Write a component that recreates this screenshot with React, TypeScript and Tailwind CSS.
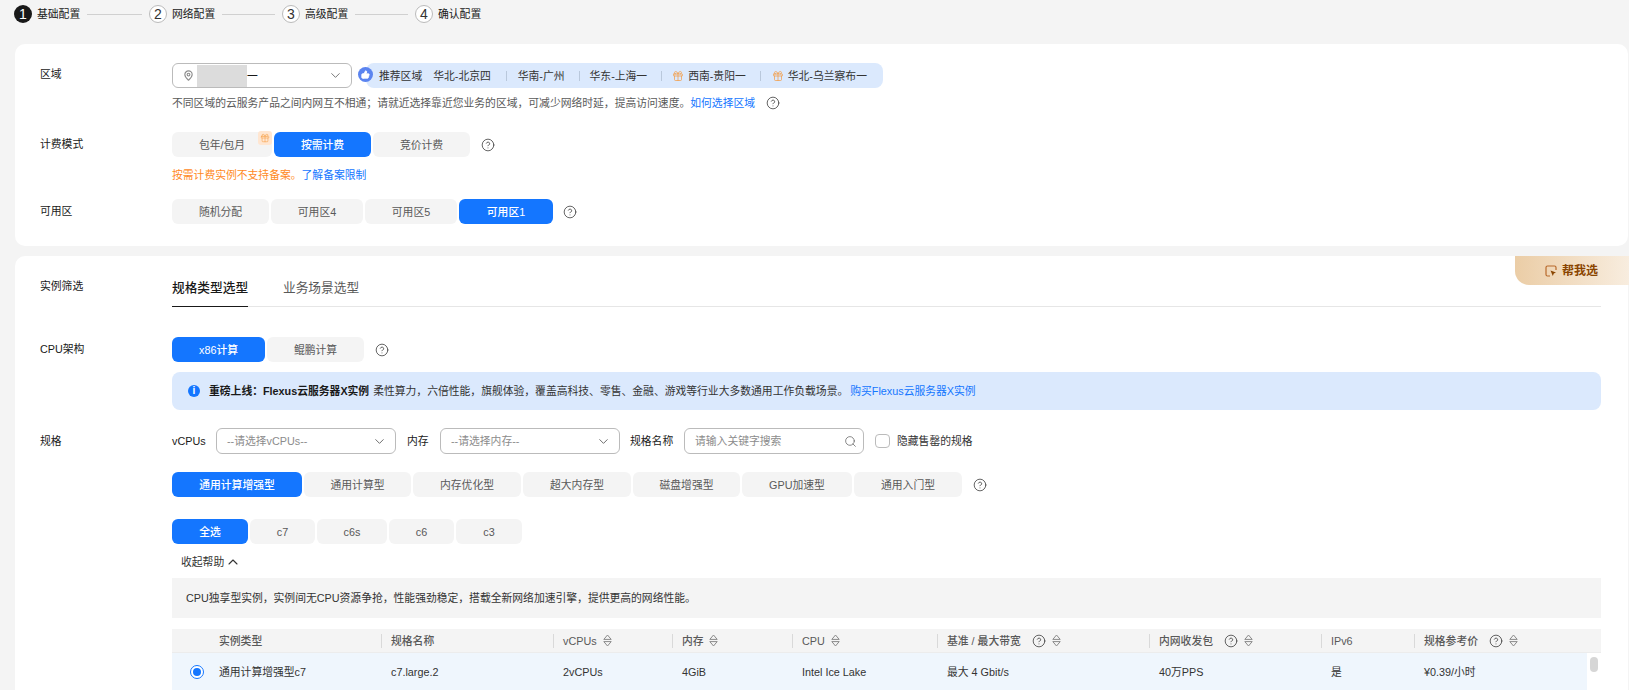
import React from "react";
import { ChevronDown, ChevronUp, CircleHelp, Gift, MapPin, Search, ThumbsUp } from "lucide-react";

const Help = ({ className = "" }: { className?: string }) => (
  <CircleHelp size={14} strokeWidth={1.3} className={"text-[#333] shrink-0 " + className} />
);

const Sort = ({ className = "" }: { className?: string }) => (
  <svg width="9" height="13" viewBox="0 0 9 13" fill="none" stroke="#8a8a8a" strokeWidth="1" className={"shrink-0 " + className}>
    <path d="M0.8 5.4 L4.5 1 L8.2 5.4 Z" />
    <path d="M0.8 7.6 L4.5 12 L8.2 7.6 Z" />
  </svg>
);

const Seg = ({ w, active, children }: { w: string; active?: boolean; children: React.ReactNode }) => (
  <div
    className={
      "h-[25px] flex items-center justify-center rounded-[6px] shrink-0 " +
      w +
      (active ? " bg-[#1476ff] text-white font-medium" : " bg-[#f4f4f4] text-[#595959]")
    }
  >
    {children}
  </div>
);

const Step = ({ n, text, active }: { n: number; text: string; active?: boolean }) => (
  <div className="flex items-center gap-[5px] shrink-0">
    <div
      className={
        "w-[18px] h-[18px] rounded-full flex items-center justify-center text-[14px] " +
        (active ? "bg-[#191919] text-white" : "bg-white border border-[#bbb] text-[#333]")
      }
    >
      {n}
    </div>
    <span className="text-[#191919] w-[44px]">{text}</span>
  </div>
);

const Line = ({ w }: { w: string }) => <div className={"h-px bg-[#d0d0d0] shrink-0 " + w} />;

const Sep = () => <div className="w-px h-[10px] bg-[#b9c8dc] shrink-0" />;

const Select = ({ w, text }: { w: string; text: string }) => (
  <div className={"h-[26px] border border-[#bbb] rounded-[6px] flex items-center justify-between pl-[10px] pr-[8px] text-[#8c8c8c] shrink-0 " + w}>
    <span>{text}</span>
    <ChevronDown size={15} strokeWidth={1.4} className="text-[#595959]" />
  </div>
);

const cols = "grid-cols-[209px_172px_119px_120px_145px_212px_172px_93px_187px]";
const rowCols = "grid-cols-[209px_172px_119px_120px_145px_212px_172px_93px_173px]";

const HeadCell = ({ children }: { children?: React.ReactNode }) => (
  <div className="flex items-center h-full">
    <div className="w-px h-[14px] bg-[#d9d9d9] mr-[9px] shrink-0" />
    {children}
  </div>
);

export default function App() {
  return (
    <div
      className="w-[1629px] h-[690px] overflow-hidden bg-[#f4f4f4] pl-[15px] pr-px text-[10.8px] leading-[16px]"
      style={{ fontFamily: '"Liberation Sans","Noto Sans CJK SC",sans-serif' }}
    >
      {/* Steps */}
      <div className="h-[44px] pt-[5px] -ml-[1px] flex items-start">
        <div className="h-[18px] flex items-center">
          <Step n={1} text="基础配置" active />
          <Line w="w-[55px] ml-[6px] mr-[7px]" />
          <Step n={2} text="网络配置" />
          <Line w="w-[53px] ml-[6px] mr-[7px]" />
          <Step n={3} text="高级配置" />
          <Line w="w-[53px] ml-[6px] mr-[7px]" />
          <Step n={4} text="确认配置" />
        </div>
      </div>

      {/* Card 1 */}
      <div className="bg-white rounded-[10px] pt-[19px] pb-[22px]">
        <div className="flex items-center h-[25px]">
          <div className="w-[157px] shrink-0 pl-[25px] pb-[4px] text-[#191919]">区域</div>
          <div className="w-[180px] h-[25px] border border-[#bbb] rounded-[6px] flex items-center pl-[10px] pr-[8px] shrink-0 text-[#191919]">
            <MapPin size={11} strokeWidth={2.4} className="text-[#8c8c8c] shrink-0" />
            <div className="ml-[3px] w-[50px] h-[22px] bg-[#dcdcdc] shrink-0" />
            <span>一</span>
            <ChevronDown size={15} strokeWidth={1.3} className="ml-auto text-[#595959]" />
          </div>
          <div className="relative ml-[14px] w-[517px] h-[25px] bg-[#dbe9fd] rounded-[8px] flex items-center text-[#333] shrink-0">
            <div className="absolute -left-[8px] top-[4px] w-[15px] h-[15px] rounded-full bg-[#5b84f0] flex items-center justify-center">
              <ThumbsUp size={9} fill="white" stroke="white" />
            </div>
            <span className="ml-[13px] text-[#333]">推荐区域</span>
            <span className="ml-[11px]">华北-北京四</span>
            <div className="ml-[15px]"><Sep /></div>
            <span className="ml-[11px]">华南-广州</span>
            <div className="ml-[14px]"><Sep /></div>
            <span className="ml-[10px]">华东-上海一</span>
            <div className="ml-[14px]"><Sep /></div>
            <Gift size={12} strokeWidth={1.4} className="ml-[10px] text-[#f59a3c]" />
            <span className="ml-[4px]">西南-贵阳一</span>
            <div className="ml-[14px]"><Sep /></div>
            <Gift size={12} strokeWidth={1.4} className="ml-[11px] text-[#f59a3c]" />
            <span className="ml-[4px]">华北-乌兰察布一</span>
          </div>
        </div>
        <div className="flex items-center mt-[7px] h-[16px]">
          <div className="w-[157px] shrink-0" />
          <span className="text-[#595959]">不同区域的云服务产品之间内网互不相通；请就近选择靠近您业务的区域，可减少网络时延，提高访问速度。</span>
          <span className="text-[#1476ff]">如何选择区域</span>
          <Help className="ml-[11px]" />
        </div>

        <div className="flex items-center mt-[21px]">
          <div className="w-[157px] shrink-0 pl-[25px] pb-[1px] text-[#191919]">计费模式</div>
          <div className="flex gap-[2px] items-center">
            <div className="relative">
              <Seg w="w-[100px]">包年/包月</Seg>
              <div className="absolute right-0 -top-[1px] w-[14px] h-[14px] bg-[#ffe6d1] rounded-[3px] flex items-center justify-center">
                <Gift size={10} strokeWidth={1.3} className="text-[#f59a3c]" />
              </div>
            </div>
            <Seg w="w-[97px]" active>按需计费</Seg>
            <Seg w="w-[97px]">竞价计费</Seg>
            <Help className="ml-[9px]" />
          </div>
        </div>
        <div className="flex items-center mt-[10px] h-[16px]">
          <div className="w-[157px] shrink-0" />
          <span className="text-[#ff8a1f]">按需计费实例不支持备案。</span>
          <span className="text-[#1476ff]">了解备案限制</span>
        </div>
        <div className="flex items-center mt-[16px]">
          <div className="w-[157px] shrink-0 pl-[25px] pb-[1px] text-[#191919]">可用区</div>
          <div className="flex gap-[2px] items-center">
            <Seg w="w-[97px]">随机分配</Seg>
            <Seg w="w-[92px]">可用区4</Seg>
            <Seg w="w-[92px]">可用区5</Seg>
            <Seg w="w-[94px]" active>可用区1</Seg>
            <Help className="ml-[8px]" />
          </div>
        </div>
      </div>

      {/* Card 2 */}
      <div className="relative mt-[10px] bg-white rounded-t-[10px] pt-[20px] h-[434px]">
        <div className="absolute right-[-1px] top-0 w-[114px] h-[29px] rounded-bl-[14px] bg-gradient-to-r from-[#ebcda6] to-[#f8eddf] flex items-center pl-[30px] gap-[5px]">
          <svg width="12" height="12" viewBox="0 0 12 12" fill="none" className="shrink-0">
            <path d="M5 11H2.5A1.5 1.5 0 0 1 1 9.5v-7A1.5 1.5 0 0 1 2.5 1h7A1.5 1.5 0 0 1 11 2.500V5" stroke="#b8692b" strokeWidth="1.2" />
            <path d="M5.500 5.500 L11 7.500 L8.800 8.500 L7.800 11 Z" fill="#8a4500" />
          </svg>
          <span className="text-[12px] font-bold text-[#8a4500]">帮我选</span>
        </div>

        <div className="flex items-start pr-[27px]">
          <div className="w-[157px] shrink-0 pl-[25px] pt-[2px] text-[#191919]">实例筛选</div>
          <div className="flex-1 h-[31px] border-b border-[#e6e6e6] flex items-start gap-[35px] text-[12.7px]">
            <div className="h-[31px] w-[76px] whitespace-nowrap border-b border-[#191919] pt-[4px] text-[#191919] font-medium">规格类型选型</div>
            <div className="pt-[4px] whitespace-nowrap text-[#595959]">业务场景选型</div>
          </div>
        </div>

        <div className="flex items-center mt-[30px]">
          <div className="w-[157px] shrink-0 pl-[25px] pb-[1px] text-[#191919]">CPU架构</div>
          <div className="flex gap-[2px] items-center">
            <Seg w="w-[93px]" active>x86计算</Seg>
            <Seg w="w-[97px]">鲲鹏计算</Seg>
            <Help className="ml-[9px]" />
          </div>
        </div>

        <div className="ml-[157px] mr-[27px] mt-[10px] h-[38px] bg-[#dbe9fd] rounded-[8px] flex items-center pl-[16px]">
          <div className="w-[12px] h-[12px] rounded-full bg-[#1476ff] text-white flex items-center justify-center text-[10px] font-bold shrink-0">i</div>
          <span className="ml-[9px] font-bold text-[#191919]">重磅上线：Flexus云服务器X实例</span>
          <span className="ml-[4px] text-[#333]">柔性算力，六倍性能，旗舰体验，覆盖高科技、零售、金融、游戏等行业大多数通用工作负载场景。</span>
          <span className="ml-[2px] text-[#1476ff]">购买Flexus云服务器X实例</span>
        </div>

        <div className="flex items-center mt-[18px] h-[26px]">
          <div className="w-[157px] shrink-0 pl-[25px] pb-[1px] text-[#191919]">规格</div>
          <span className="w-[44px] text-[#191919] shrink-0">vCPUs</span>
          <Select w="w-[180px]" text="--请选择vCPUs--" />
          <span className="ml-[11px] w-[33px] text-[#191919] shrink-0">内存</span>
          <Select w="w-[180px]" text="--请选择内存--" />
          <span className="ml-[10px] w-[54px] text-[#191919] shrink-0">规格名称</span>
          <div className="w-[180px] h-[26px] border border-[#bbb] rounded-[6px] flex items-center justify-between pl-[10px] pr-[6px] text-[#8c8c8c] shrink-0">
            <span>请输入关键字搜索</span>
            <Search size={13} strokeWidth={1.3} className="text-[#595959]" />
          </div>
          <div className="ml-[11px] w-[15px] h-[14px] border border-[#bbb] rounded-[4px] shrink-0" />
          <span className="ml-[7px] text-[#333]">隐藏售罄的规格</span>
        </div>

        <div className="flex items-center mt-[18px] ml-[157px] gap-[2px]">
          <Seg w="w-[130px]" active>通用计算增强型</Seg>
          <Seg w="w-[107px]">通用计算型</Seg>
          <Seg w="w-[108px]">内存优化型</Seg>
          <Seg w="w-[108px]">超大内存型</Seg>
          <Seg w="w-[107px]">磁盘增强型</Seg>
          <Seg w="w-[110px]">GPU加速型</Seg>
          <Seg w="w-[108px]">通用入门型</Seg>
          <Help className="ml-[9px]" />
        </div>

        <div className="flex items-center mt-[22px] ml-[157px] gap-[2px]">
          <Seg w="w-[76px]" active>全选</Seg>
          <Seg w="w-[65px]">c7</Seg>
          <Seg w="w-[70px]">c6s</Seg>
          <Seg w="w-[65px]">c6</Seg>
          <Seg w="w-[66px]">c3</Seg>
        </div>

        <div className="flex items-center mt-[10px] h-[16px] ml-[166px] text-[#333]">
          <span>收起帮助</span>
          <ChevronUp size={16} strokeWidth={1.6} className="ml-[1px]" />
        </div>

        <div className="ml-[157px] mr-[27px] mt-[8px] h-[40px] bg-[#f4f4f4] flex items-center pl-[14px] text-[#333]">
          CPU独享型实例，实例间无CPU资源争抢，性能强劲稳定，搭载全新网络加速引擎，提供更高的网络性能。
        </div>

        <div className="ml-[157px] mr-[27px] mt-[11px]">
          <div className={"grid h-[24px] bg-[#f4f4f4] text-[#595959] font-medium border-b border-[#ececec] " + cols}>
            <div className="flex items-center pl-[47px]">实例类型</div>
            <HeadCell>规格名称</HeadCell>
            <HeadCell>vCPUs<Sort className="ml-[6px]" /></HeadCell>
            <HeadCell>内存<Sort className="ml-[5px]" /></HeadCell>
            <HeadCell>CPU<Sort className="ml-[6px]" /></HeadCell>
            <HeadCell>基准 / 最大带宽<Help className="ml-[11px]" /><Sort className="ml-[6px]" /></HeadCell>
            <HeadCell>内网收发包<Help className="ml-[11px]" /><Sort className="ml-[6px]" /></HeadCell>
            <HeadCell>IPv6</HeadCell>
            <HeadCell>规格参考价<Help className="ml-[11px]" /><Sort className="ml-[6px]" /></HeadCell>
          </div>
          <div className="flex">
            <div className={"grid h-[37px] w-[1415px] bg-[#eff6fd] text-[#333] items-center " + rowCols}>
              <div className="flex items-center pl-[18px]">
                <div className="w-[14px] h-[14px] rounded-full border border-[#1476ff] bg-white flex items-center justify-center shrink-0">
                  <div className="w-[8px] h-[8px] rounded-full bg-[#1476ff]" />
                </div>
                <span className="ml-[15px]">通用计算增强型c7</span>
              </div>
              <div className="pl-[10px]">c7.large.2</div>
              <div className="pl-[10px]">2vCPUs</div>
              <div className="pl-[10px]">4GiB</div>
              <div className="pl-[10px]">Intel Ice Lake</div>
              <div className="pl-[10px]">最大 4 Gbit/s</div>
              <div className="pl-[10px]">40万PPS</div>
              <div className="pl-[10px]">是</div>
              <div className="pl-[10px]">¥0.39/小时</div>
            </div>
            <div className="ml-[3px] mt-[4px] w-[8px] h-[15px] rounded-[4px] bg-[#d6d6d6]" />
          </div>
        </div>
      </div>
    </div>
  );
}
